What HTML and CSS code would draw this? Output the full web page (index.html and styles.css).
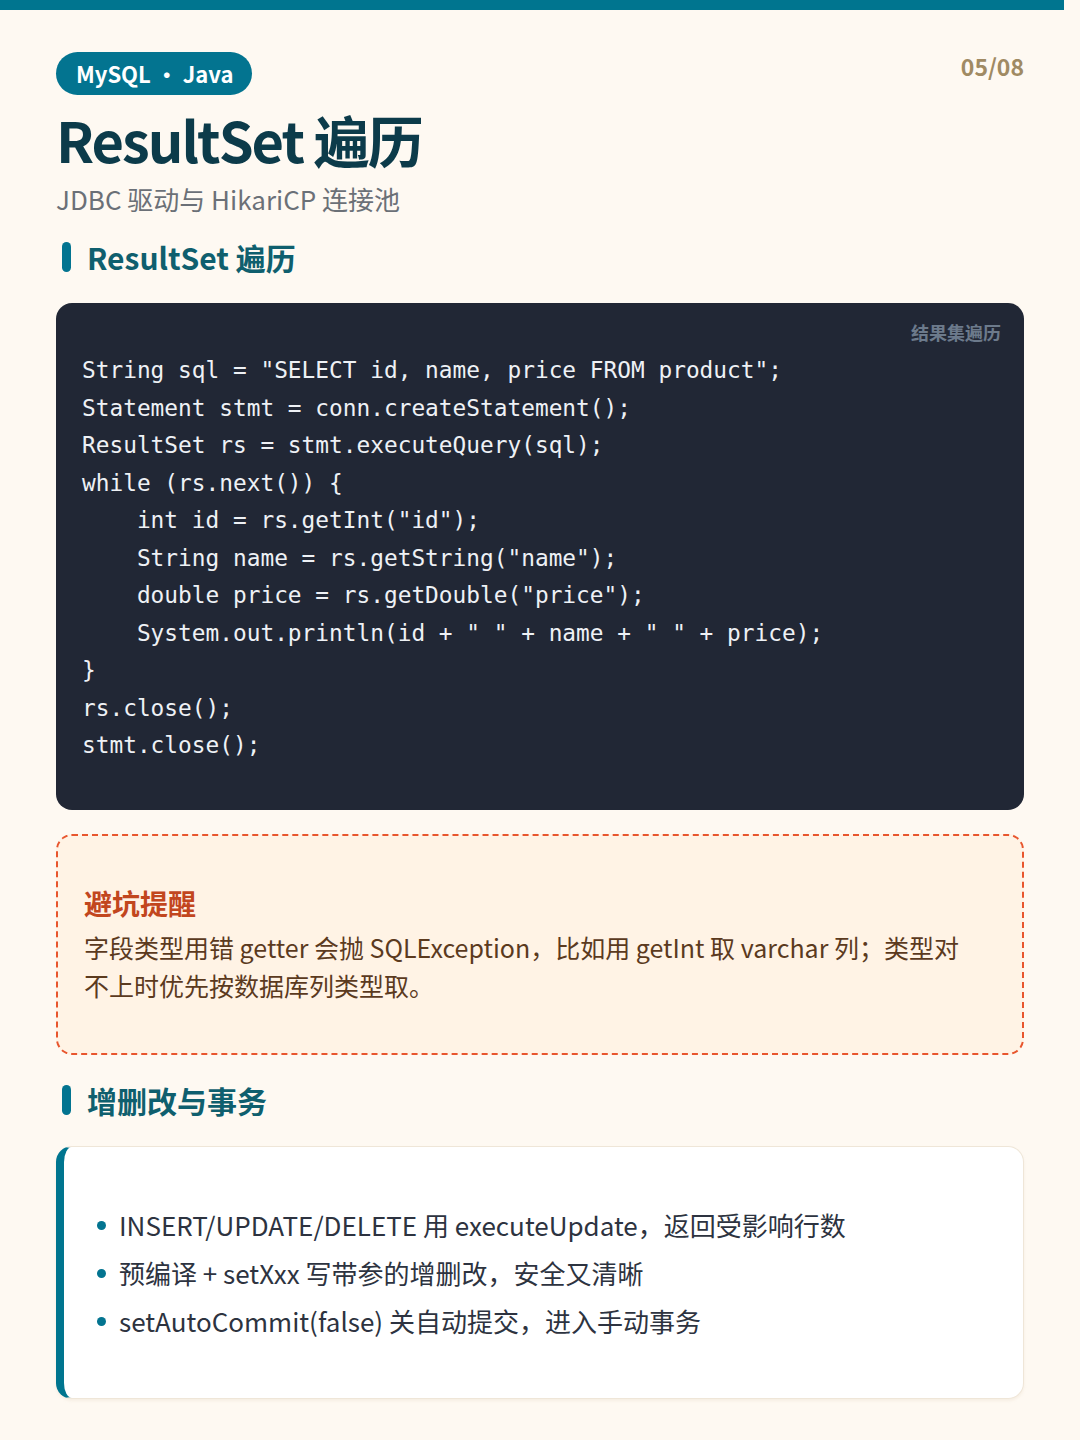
FILE: index.html
```html
<!DOCTYPE html>
<html lang="zh-CN">
<head>
<meta charset="utf-8">
<title>ResultSet 遍历</title>
<link rel="stylesheet" href="styles.css">
</head>
<body>
<div class="topbar"></div>
<main class="page">
  <header class="head">
    <div class="head-left">
      <span class="tag">MySQL • Java</span>
      <h1 class="title">ResultSet 遍历</h1>
      <p class="subtitle">JDBC 驱动与 HikariCP 连接池</p>
    </div>
    <span class="pagenum">05/08</span>
  </header>

  <h2 class="section">ResultSet 遍历</h2>

  <div class="code-card">
    <div class="code-label">结果集遍历</div>
<pre class="code">String sql = "SELECT id, name, price FROM product";
Statement stmt = conn.createStatement();
ResultSet rs = stmt.executeQuery(sql);
while (rs.next()) {
    int id = rs.getInt("id");
    String name = rs.getString("name");
    double price = rs.getDouble("price");
    System.out.println(id + " " + name + " " + price);
}
rs.close();
stmt.close();</pre>
  </div>

  <div class="warn">
    <div class="warn-title">避坑提醒</div>
    <p class="warn-text">字段类型用错 getter 会抛 SQLException，比如用 getInt 取 varchar 列；类型对不上时优先按数据库列类型取。</p>
  </div>

  <h2 class="section section-2">增删改与事务</h2>

  <div class="list-card">
    <ul class="list">
      <li>INSERT/UPDATE/DELETE 用 executeUpdate，返回受影响行数</li>
      <li>预编译 + setXxx 写带参的增删改，安全又清晰</li>
      <li>setAutoCommit(false) 关自动提交，进入手动事务</li>
    </ul>
  </div>
</main>
</body>
</html>
```

FILE: styles.css
```css
* { box-sizing: border-box; }
html, body { margin: 0; padding: 0; }
body {
  background: #fef9f2;
  font-family: "Noto Sans CJK SC", "Noto Sans", sans-serif;
  color: #2d3340;
}
.topbar {
  height: 10px;
  width: calc(100% - 16px);
  background: #00758f;
}
.page {
  padding: 42px 56px 40px;
}
.head {
  display: flex;
  justify-content: space-between;
  align-items: flex-start;
}
.head-left { display: flex; flex-direction: column; align-items: flex-start; }
.tag {
  display: inline-block;
  background: #037490;
  color: #fff;
  font-weight: 700;
  font-size: 22px;
  line-height: 43px;
  height: 43px;
  padding: 0 19px 0 20px;
  border-radius: 22px;
}
.pagenum {
  margin-top: -3px;
  font-size: 23px;
  font-weight: 700;
  color: #a08a63;
}
.title {
  margin: 8px 0 0;
  font-size: 56px;
  line-height: 72px;
  font-weight: 700;
  color: #0c3b4a;
  letter-spacing: -2px;
}
.subtitle {
  margin: 6px 0 0;
  font-size: 26px;
  line-height: 36px;
  color: #6b7077;
}
.section {
  display: flex;
  align-items: center;
  margin: 20px 0 0 6px;
  font-size: 30px;
  line-height: 40px;
  font-weight: 700;
  color: #0f5f6e;
}
.section-2 { margin-top: 25px; }
.section::before {
  content: "";
  display: block;
  width: 9px;
  height: 30px;
  border-radius: 5px;
  background: #037490;
  margin-right: 16px;
}
.code-card {
  margin-top: 26px;
  background: #212735;
  border-radius: 16px;
  padding: 17px 23px 45px 26px;
}
.code-label {
  text-align: right;
  font-size: 18px;
  line-height: 24px;
  font-weight: 700;
  color: #6c7a8b;
}
.code {
  margin: 8px 0 0;
  font-family: "DejaVu Sans Mono", monospace;
  font-size: 22.8px;
  line-height: 37.5px;
  color: #eef1f5;
  white-space: pre;
}
.warn {
  margin-top: 24px;
  border: 2px dashed #e8562e;
  border-radius: 16px;
  background: #fff3e5;
  padding: 49px 40px 49px 26px;
}
.warn-title {
  font-size: 28px;
  line-height: 36px;
  font-weight: 700;
  color: #c2461e;
}
.warn-text {
  margin: 7px 0 0;
  font-size: 25px;
  line-height: 38px;
  color: #5b3a1e;
}
.list-card {
  margin-top: 26px;
  background: #fff;
  border: 1px solid #efe6d8;
  border-left: 8px solid #00758f;
  border-radius: 16px;
  padding: 54px 30px 53px 30px;
  box-shadow: 0 2px 3px rgba(200, 180, 150, 0.15);
}
.list {
  margin: 0;
  padding: 0;
  list-style: none;
}
.list li {
  position: relative;
  padding-left: 25px;
  font-size: 26px;
  line-height: 48px;
  color: #2d3340;
}
.list li::before {
  content: "";
  position: absolute;
  left: 3px;
  top: 20px;
  width: 9px;
  height: 9px;
  border-radius: 50%;
  background: #037490;
}
```
